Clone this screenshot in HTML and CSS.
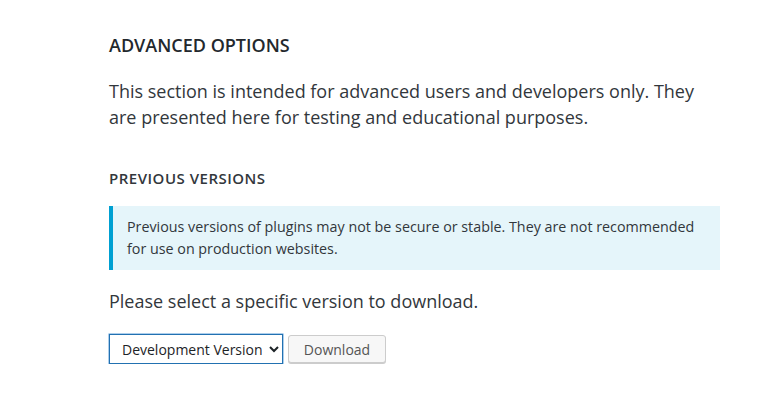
FILE: index.html
```html
<!DOCTYPE html>
<html>
<head>
<meta charset="utf-8">
<link rel="stylesheet" href="styles.css">
</head>
<body>
<main class="section">
  <h2 class="title">ADVANCED OPTIONS</h2>
  <p class="lead">This section is intended for advanced users and developers only. They are presented here for testing and educational purposes.</p>
  <h3 class="subtitle">PREVIOUS VERSIONS</h3>
  <div class="notice">
    <p>Previous versions of plugins may not be secure or stable. They are not recommended for use on production websites.</p>
  </div>
  <p class="lead select-lead">Please select a specific version to download.</p>
  <div class="controls">
    <select class="version">
      <option>Development Version</option>
    </select>
    <button class="btn">Download</button>
  </div>
</main>
</body>
</html>
```
FILE: styles.css
```css
html, body {
  margin: 0;
  padding: 0;
  background: #fff;
}
body {
  font-family: "Open Sans", "Noto Sans", sans-serif;
  color: #32373c;
}
.section {
  width: 611px;
  padding: 33px 0 0 109px;
}
.title {
  margin: 0;
  font-size: 18px;
  font-weight: 600;
  line-height: 24px;
  color: #23282d;
}
.lead {
  margin: 21px 0 0;
  font-size: 18px;
  line-height: 26px;
  color: #32373c;
}
.subtitle {
  margin: 38px 0 0;
  font-size: 15px;
  font-weight: 600;
  letter-spacing: 0.5px;
  line-height: 20px;
  color: #32373c;
}
.notice {
  margin-top: 18px;
  background: #e5f5fa;
  border-left: 4px solid #00a0d2;
  padding: 10px 14px;
}
.notice p {
  margin: 0;
  font-size: 14.3px;
  line-height: 22px;
}
.select-lead {
  margin-top: 18px;
}
.controls {
  display: flex;
  align-items: center;
  gap: 5px;
  margin-top: 20px;
}
.version {
  font-family: "Open Sans", "Noto Sans", sans-serif;
  font-size: 14px;
  height: 30px;
  width: 174px;
  border: 1px solid #2271b1;
  border-radius: 0;
  background: #fff;
  color: #1d2327;
  padding: 0 4px 0 8px;
  box-shadow: 0 0 0 0.5px #5b9dd9;
}
.btn {
  font-family: "Open Sans", "Noto Sans", sans-serif;
  font-size: 14px;
  height: 28px;
  width: 98px;
  border: 1px solid #ccc;
  border-radius: 3px;
  background: #f7f7f7;
  color: #555;
  box-shadow: 0 1px 0 #ccc;
  padding: 0 10px;
}
```
